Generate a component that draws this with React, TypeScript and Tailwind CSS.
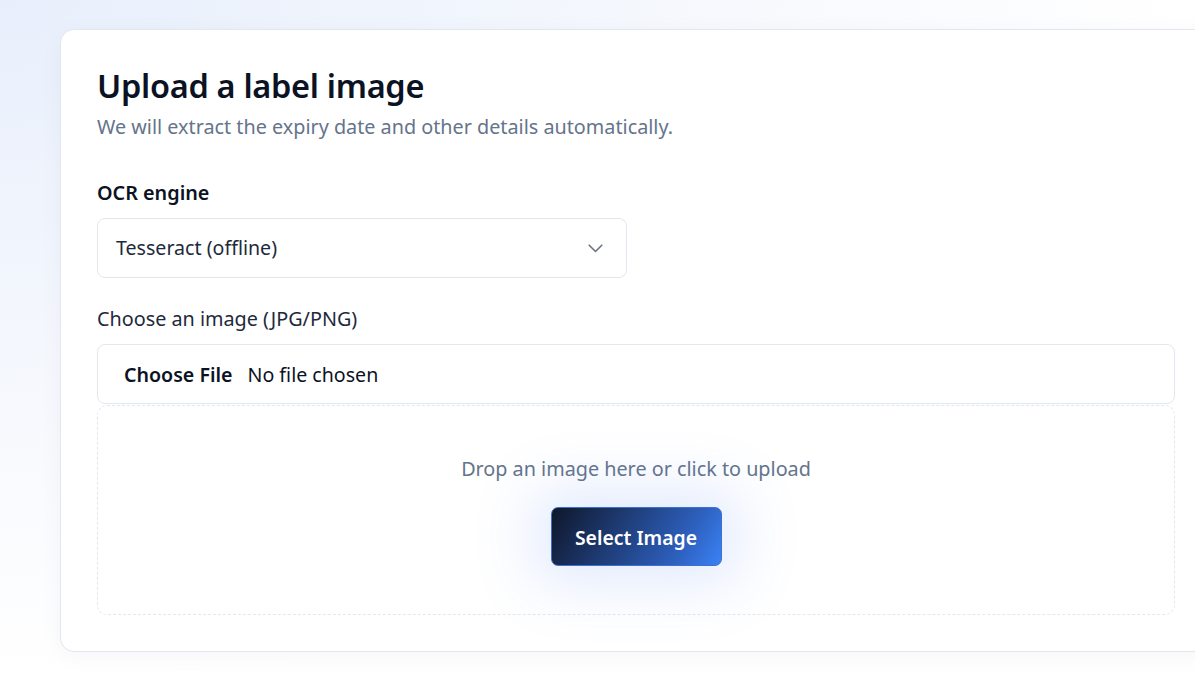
export default function App() {
  return (
    <div
      className="min-h-screen w-full overflow-hidden bg-[radial-gradient(ellipse_at_top_left,#e8effc_0%,#f4f7fd_35%,#ffffff_70%)] pl-[60px] pt-[29px] pb-8"
      style={{ fontFamily: '"Noto Sans", "Open Sans", sans-serif' }}
    >
      <div className="w-[1152px] shrink-0 rounded-[14px] border border-[#e0e7f1] bg-white px-9 pt-[34px] pb-[36px] shadow-[0_4px_24px_rgba(15,23,42,0.04)]">
        {/* Header */}
        <h1 className="text-[32.5px] font-semibold leading-[44px] tracking-[-0.3px] text-[#0b1224]">
          Upload a label image
        </h1>
        <p className="mt-[5px] text-[19.8px] leading-[28px] text-[#64748b]">
          We will extract the expiry date and other details automatically.
        </p>

        {/* OCR engine */}
        <label className="mt-[38px] block text-[19.8px] font-semibold leading-[28px] text-[#0b1224]">
          OCR engine
        </label>
        <div className="mt-[11px] flex h-[60px] w-[530px] items-center justify-between rounded-[8px] border border-[#e2e8f0] bg-white pl-[18px] pr-[23px]">
          <span className="text-[19.6px] text-[#1e293b]">Tesseract (offline)</span>
          <svg width="15" height="9" viewBox="0 0 15 9" fill="none">
            <path d="M1.2 1.2L7.5 7.5L13.8 1.2" stroke="#6b7280" strokeWidth="1.6" strokeLinecap="round" strokeLinejoin="round" />
          </svg>
        </div>

        {/* Image */}
        <p className="mt-[27px] text-[19.8px] leading-[28px] text-[#1e293b]">Choose an image (JPG/PNG)</p>
        <div className="mt-[11px] flex h-[60px] items-center rounded-[8px] border border-[#e2e8f0] bg-white pl-[26px] pt-[2px]">
          <span className="text-[19.6px] font-semibold text-[#0b1224]">Choose File</span>
          <span className="ml-[15px] text-[19.6px] text-[#0b1224]">No file chosen</span>
        </div>

        {/* Dropzone */}
        <div className="mt-px flex h-[210px] flex-col items-center rounded-[10px] border border-dashed border-[#e2e8f0] bg-white pt-[49px]">
          <p className="text-[19.8px] leading-[28px] text-[#64748b]">Drop an image here or click to upload</p>
          <button className="mt-[24px] flex h-[59px] w-[171px] items-center justify-center rounded-[7px] border border-[#3b6fd0] bg-[linear-gradient(120deg,#0f172a_0%,#1f3d78_40%,#2d5fbc_75%,#3b82f6_100%)] pt-[3px] text-[19.4px] font-semibold text-white shadow-[0_0_60px_18px_rgba(96,140,246,0.18)]">
            Select Image
          </button>
        </div>
      </div>
    </div>
  );
}
